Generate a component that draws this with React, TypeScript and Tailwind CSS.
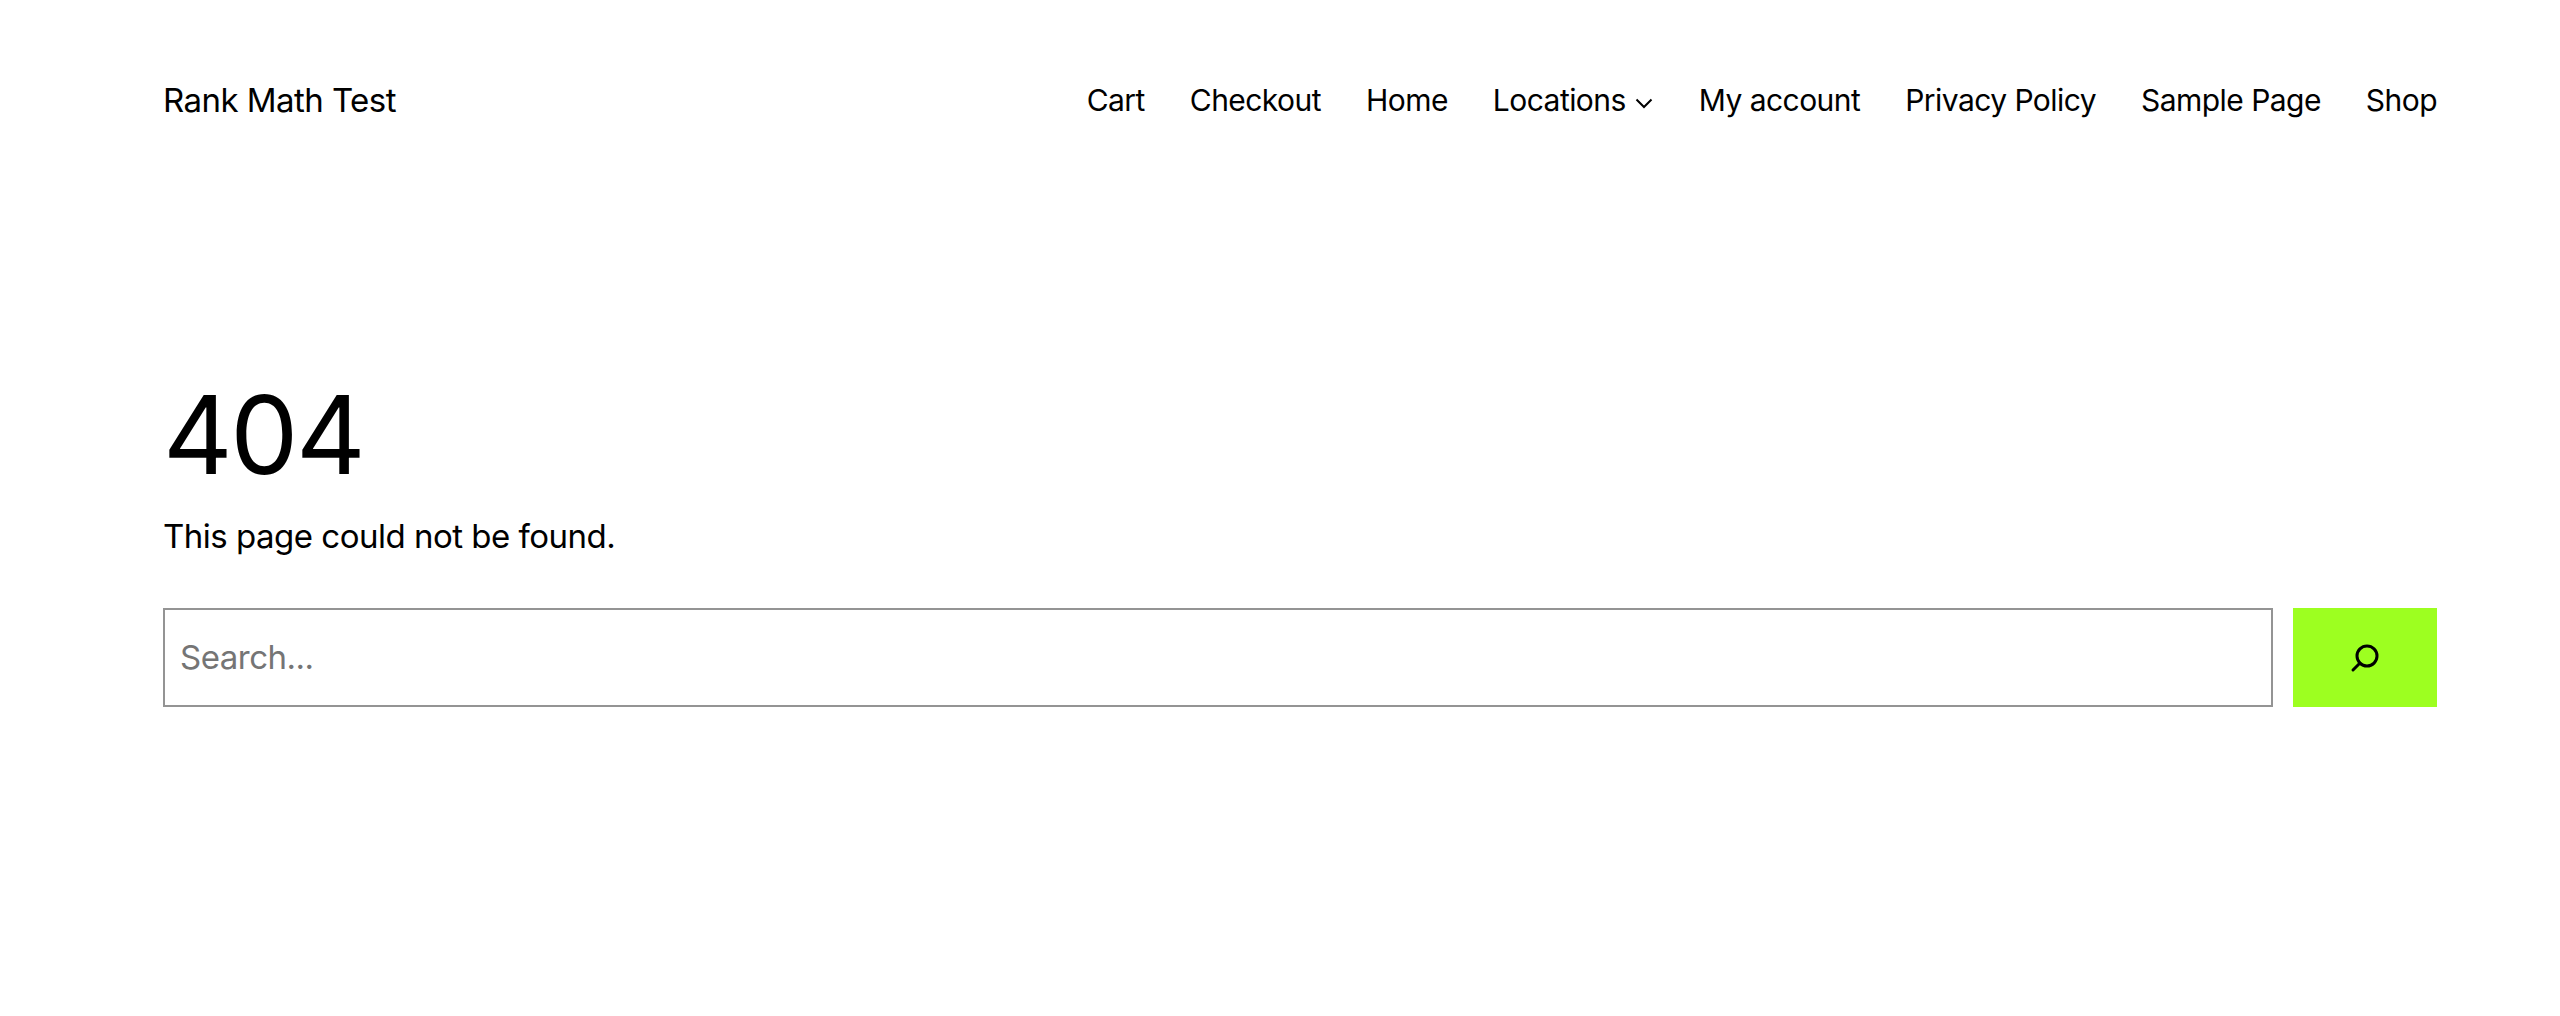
import React from "react";

const links = ["Cart", "Checkout", "Home", "Locations", "My account", "Privacy Policy", "Sample Page", "Shop"];

export default function App() {
  return (
    <div className="min-h-[1016px] bg-white pl-[163px] pr-[123px] text-black font-['Inter','Liberation_Sans',sans-serif]">
      <header className="flex items-center justify-between pt-[80px]">
        <a className="text-[33px] leading-[40px] tracking-[-0.55px]">Rank Math Test</a>
        <nav className="flex items-center gap-[45px] text-[30px] leading-[40px] tracking-[-0.55px]">
          {links.map((l) => (
            <a key={l} className="flex items-center">
              {l}
              {l === "Locations" && (
                <svg className="ml-[8px] mt-[4px]" width="20" height="20" viewBox="0 0 12 12" fill="none">
                  <path d="M1.500 4.500L6 9l4.500-4.500" stroke="currentColor" strokeWidth="1.2" />
                </svg>
              )}
            </a>
          ))}
        </nav>
      </header>
      <main className="pt-[255px]">
        <h1 className="text-[108px] leading-[120px] font-normal tracking-[-2.5px]">404</h1>
        <p className="mt-[19px] text-[33px] leading-[44px] tracking-[-0.5px]">This page could not be found.</p>
        <form className="mt-[50px] flex gap-[20px]">
          <div className="flex h-[99px] flex-1 items-center border-2 border-[#949494] px-[15px] text-[33px] tracking-[-0.5px] text-[#757575]">Search...</div>
          <button className="flex h-[99px] w-[144px] items-center justify-center bg-[#9dff20]">
            <svg className="mr-[2px] mt-[2px]" width="32" height="32" viewBox="0 0 32 32" fill="none" stroke="currentColor" strokeWidth="3" strokeLinecap="round">
              <circle cx="19" cy="13" r="10" />
              <path d="M12 20L5 27" />
            </svg>
          </button>
        </form>
      </main>
    </div>
  );
}
